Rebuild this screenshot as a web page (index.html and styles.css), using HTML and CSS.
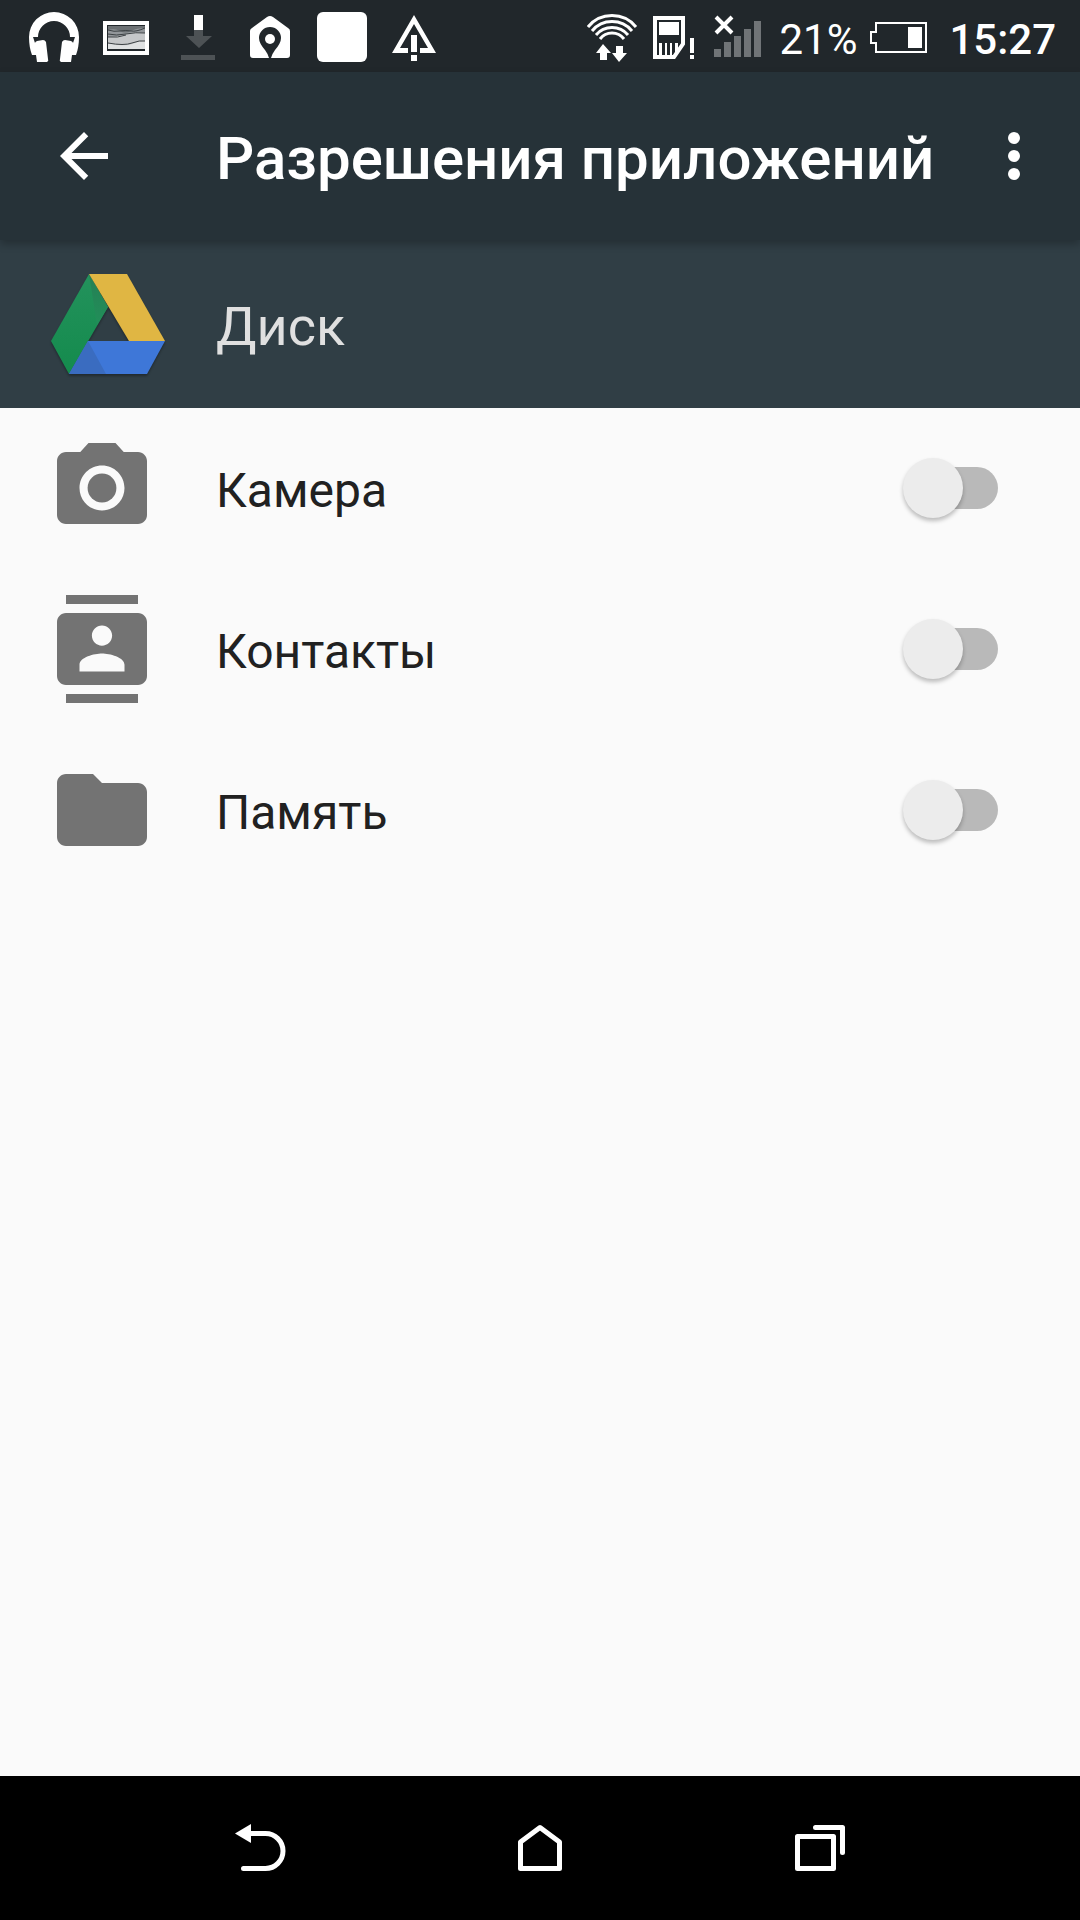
FILE: index.html
```html
<!DOCTYPE html>
<html lang="ru">
<head>
<meta charset="UTF-8">
<meta name="viewport" content="width=device-width, initial-scale=1.0">
<title>Разрешения приложений</title>
<link rel="stylesheet" href="styles.css">
</head>
<body>

<div class="status-bar">
    <div class="notifications">
        <svg width="72" height="72" viewBox="0 0 72 72" fill="#fff">
            <path d="M11 37A25 25 0 0 1 61 37Q61 47 58 55H54L53 62H43Q41 61 42 59L44 42Q45 40 47 40L53 41Q55 42 55 43L57 37H52A16 16 0 0 0 20 37H15L17 43Q17 42 19 41L25 40Q27 40 28 42L30 59Q31 61 29 62H19L18 55H14Q11 47 11 37Z"/>
        </svg>
        <svg width="72" height="72" viewBox="0 0 72 72">
            <rect x="15" y="23" width="42" height="30" fill="#21272b" stroke="#fff" stroke-width="4"/>
            <rect x="18" y="26" width="37" height="23" fill="#dfe1e2"/>
            <path d="M18 26H55V34Q45 33 36 36T18 37Z" fill="#92969a"/>
            <path d="M18 26H55V28Q47 28 41 31T30 31T18 30Z" fill="#6c7174"/>
            <path d="M18 37Q28 37 36 34T55 33V41Q48 41 42 44T18 43Z" fill="#c5c7c9"/>
            <path d="M18 30Q24 32 30 31T41 31T55 28M18 34Q26 36 36 34T55 33M18 37Q28 38 36 35M18 43Q34 46 42 43T55 41" fill="none" stroke="#3c4144"/>
        </svg>
        <svg width="72" height="72" viewBox="0 0 72 72">
            <path d="M32 30H41V36H50L37 48L24 36H32ZM19 55H53V60H19Z" fill="#4d5255"/>
            <path d="M32 15H41V30H32Z" fill="#fff"/>
        </svg>
        <svg width="72" height="72" viewBox="0 0 72 72" fill="#fff">
            <path d="M33 17Q36 15 39 17L54 28Q56 29 56 31V55Q56 58 53 58H37Q38 54 41 50Q47 43 47 38A11 11 0 0 0 25 38Q25 43 31 50Q34 54 35 58H19Q16 58 16 55V31Q16 29 18 28Z"/>
            <circle cx="36" cy="39" r="5"/>
        </svg>
        <svg width="72" height="72" viewBox="0 0 72 72">
            <rect x="11" y="12" width="50" height="50" rx="6" fill="#fff"/>
        </svg>
        <svg width="72" height="72" viewBox="0 0 72 72" fill="#fff">
            <path d="M36 15L58 53H42V48H50L36 24L22 48H30V53H14ZM33 35H39V52H33ZM33 55H39V61H33Z"/>
        </svg>
    </div>
    <div class="system">
        <svg width="60" height="72" viewBox="0 0 60 72">
            <path d="M1 27A31 31 0 0 1 49 27M5 31A26 26 0 0 1 45 31M9 35A21 21 0 0 1 41 35M13 39A15 15 0 0 1 37 39" fill="none" stroke="#fff" stroke-width="3"/>
            <path d="M16 44L24 53H20V60H13V53H9ZM29 46H36V53H40L32 62L25 53H29Z" fill="#fff"/>
        </svg>
        <svg width="60" height="72" viewBox="0 0 60 72">
            <path d="M8 18H36V44L27 57H8Z" fill="none" stroke="#fff" stroke-width="4"/>
            <path d="M12 22H32V35H12ZM12 43H15V57H12ZM18 43H20V57H18ZM23 43H25V57H23ZM28 43H31V50L28 54ZM43 38H47V53H43ZM43 55H47V59H43Z" fill="#fff"/>
        </svg>
        <svg width="60" height="72" viewBox="0 0 60 72">
            <path d="M7 49H14V57H7ZM17 42H24V57H17ZM27 36H34V57H27ZM37 29H44V57H37ZM47 21H54V57H47Z" fill="#707477"/>
            <path d="M9 17L25 33M25 17L9 33" stroke="#fff" stroke-width="4"/>
        </svg>
        <span class="percent">21%</span>
        <svg width="60" height="72" viewBox="0 0 60 72">
            <path d="M8 23H58V52H8V43H3V32H8Z" fill="none" stroke="#fff" stroke-width="2"/>
            <rect x="40" y="27" width="14" height="21" fill="#fff"/>
        </svg>
        <span class="clock">15:27</span>
    </div>
</div>

<header class="toolbar">
    <button class="icon-button" type="button" aria-label="Назад">
        <svg width="72" height="72" viewBox="0 0 24 24" fill="#fff">
            <path d="M20 11H7.830l5.590-5.590L12 4l-8 8 8 8 1.410-1.410L7.830 13H20v-2z"/>
        </svg>
    </button>
    <h1>Разрешения приложений</h1>
    <button class="icon-button" type="button" aria-label="Ещё">
        <svg width="72" height="72" viewBox="0 0 24 24" fill="#fff">
            <circle cx="12" cy="6" r="2"/>
            <circle cx="12" cy="12" r="2"/>
            <circle cx="12" cy="18" r="2"/>
        </svg>
    </button>
</header>

<div class="app-header">
    <svg class="app-logo" width="144" height="144" viewBox="0 0 144 144">
        <defs>
            <linearGradient id="green" x1="0" y1="0" x2="0" y2="1">
                <stop offset="0" stop-color="#23925c"/>
                <stop offset="1" stop-color="#148b4d"/>
            </linearGradient>
            <linearGradient id="fold" x1="0" y1="0" x2="0" y2="1">
                <stop offset="0" stop-color="#267f55"/>
                <stop offset="1" stop-color="#218f59"/>
            </linearGradient>
        </defs>
        <path d="M53 22L72 55L33 122L15 89Z" fill="url(#green)"/>
        <path d="M53 22L72 55L61 73Z" fill="url(#fold)"/>
        <path d="M53 22H91L129 89H93Z" fill="#e0b643"/>
        <path d="M52 89H129L111 122H33Z" fill="#3e77d8"/>
        <path d="M52 89L33 122H70Z" fill="#3a6cc0"/>
    </svg>
    <h2>Диск</h2>
</div>

<main>
    <ul class="permissions">
        <li>
            <svg width="108" height="108" viewBox="0 0 24 24" fill="#737373">
                <circle cx="12" cy="12" r="3.200"/>
                <path d="M9 2L7.170 4H4c-1.100 0-2 .9-2 2v12c0 1.100.9 2 2 2h16c1.100 0 2-.9 2-2V6c0-1.100-.9-2-2-2h-3.170L15 2H9zm3 15c-2.760 0-5-2.240-5-5s2.240-5 5-5 5 2.240 5 5-2.240 5-5 5z"/>
            </svg>
            <label for="camera">Камера</label>
            <input type="checkbox" class="switch" id="camera" name="camera">
        </li>
        <li>
            <svg width="108" height="108" viewBox="0 0 24 24" fill="#737373">
                <path d="M20 0H4v2h16V0zM4 24h16v-2H4v2zM20 4H4c-1.100 0-2 .9-2 2v12c0 1.100.9 2 2 2h16c1.100 0 2-.9 2-2V6c0-1.100-.9-2-2-2zm-8 2.750c1.240 0 2.250 1.010 2.250 2.250s-1.010 2.250-2.250 2.250S9.750 10.240 9.750 9 10.760 6.750 12 6.750zM17 17H7v-1.500c0-1.670 3.330-2.500 5-2.500s5 .83 5 2.500V17z"/>
            </svg>
            <label for="contacts">Контакты</label>
            <input type="checkbox" class="switch" id="contacts" name="contacts">
        </li>
        <li>
            <svg width="108" height="108" viewBox="0 0 24 24" fill="#737373">
                <path d="M10 4H4c-1.100 0-2 .9-2 2v12c0 1.100.9 2 2 2h16c1.100 0 2-.9 2-2V8c0-1.100-.9-2-2-2h-8l-2-2z"/>
            </svg>
            <label for="storage">Память</label>
            <input type="checkbox" class="switch" id="storage" name="storage">
        </li>
    </ul>
</main>

<nav class="nav-bar">
    <button type="button" aria-label="Назад">
        <svg width="72" height="72" viewBox="0 0 72 72">
            <path d="M11 21.500L27 12V31Z" fill="#fff"/>
            <path d="M26 21.500H41.500A17.500 17.500 0 0 1 41.500 56.500H19.500" fill="none" stroke="#fff" stroke-width="5" stroke-linecap="round"/>
        </svg>
    </button>
    <button type="button" aria-label="Домой">
        <svg width="72" height="72" viewBox="0 0 72 72">
            <path d="M16.500 30L36 15.500L55.500 30V56.500H16.500Z" fill="none" stroke="#fff" stroke-width="5" stroke-linejoin="round"/>
        </svg>
    </button>
    <button type="button" aria-label="Недавние">
        <svg width="72" height="72" viewBox="0 0 72 72">
            <path d="M13.500 24.500H49.500V56.500H13.500ZM31.500 15.500H58.500V40.500" fill="none" stroke="#fff" stroke-width="5" stroke-linecap="round" stroke-linejoin="round"/>
        </svg>
    </button>
</nav>

</body>
</html>
```

FILE: styles.css
```css
* {
    box-sizing: border-box;
}
body {
    display: flex;
    flex-direction: column;
    min-height: 100vh;
    margin: 0;
    background-color: #fafafa;
    color: #212121;
    font-family: Roboto, sans-serif;
}
svg {
    display: block;
    flex-shrink: 0;
}
button {
    padding: 0;
    border: none;
    background: none;
    cursor: pointer;
}
h1,
h2 {
    margin: 0;
}
.status-bar {
    display: flex;
    justify-content: space-between;
    height: 72px;
    padding: 0 24px 0 18px;
    background-color: #21272b;
    color: #fff;
    font-size: 42px;
    line-height: 64px;
}
.notifications,
.system {
    display: flex;
}
.percent,
.clock {
    padding-top: 8px;
}
.percent {
    margin: 0 11px 0 12px;
}
.clock {
    margin-left: 21px;
    font-weight: 500;
}
.toolbar {
    position: relative;
    display: flex;
    align-items: center;
    height: 168px;
    padding: 0 30px 0 48px;
    background-color: #263238;
    color: #fff;
    box-shadow: 0 4px 8px rgba(0, 0, 0, 0.25);
}
.toolbar h1 {
    flex: 1;
    margin-left: 96px;
    padding-top: 4px;
    font-size: 60px;
    font-weight: 500;
    white-space: nowrap;
}
.app-header {
    display: flex;
    align-items: center;
    height: 168px;
    padding: 0 36px;
    background-color: #303e45;
    color: #e0e0e0;
}
.app-logo {
    filter: drop-shadow(0 2px 1px rgba(0, 0, 0, 0.3));
}
.app-header h2 {
    margin-left: 36px;
    padding-top: 4px;
    font-size: 54px;
    font-weight: 400;
}
main {
    flex: 1;
}
.permissions {
    margin: 0;
    padding: 0;
    list-style-type: none;
}
.permissions li {
    display: flex;
    align-items: center;
    height: 161px;
    padding: 0 82px 1px 48px;
}
.permissions label {
    flex: 1;
    margin-left: 60px;
    padding-top: 4px;
    font-size: 48px;
    cursor: pointer;
}
.switch {
    position: relative;
    width: 84px;
    height: 42px;
    margin: 0;
    border-radius: 21px;
    background-color: #b9b9b9;
    appearance: none;
    cursor: pointer;
}
.switch::before {
    content: "";
    position: absolute;
    top: -9px;
    left: -11px;
    width: 60px;
    height: 60px;
    border-radius: 50%;
    background-color: #ececec;
    box-shadow: 0 3px 4px rgba(0, 0, 0, 0.25);
}
.switch:checked {
    background-color: #80cbc4;
}
.switch:checked::before {
    left: 35px;
    background-color: #009688;
}
.nav-bar {
    display: flex;
    justify-content: center;
    align-items: center;
    gap: 208px;
    height: 144px;
    background-color: #000;
}
```
